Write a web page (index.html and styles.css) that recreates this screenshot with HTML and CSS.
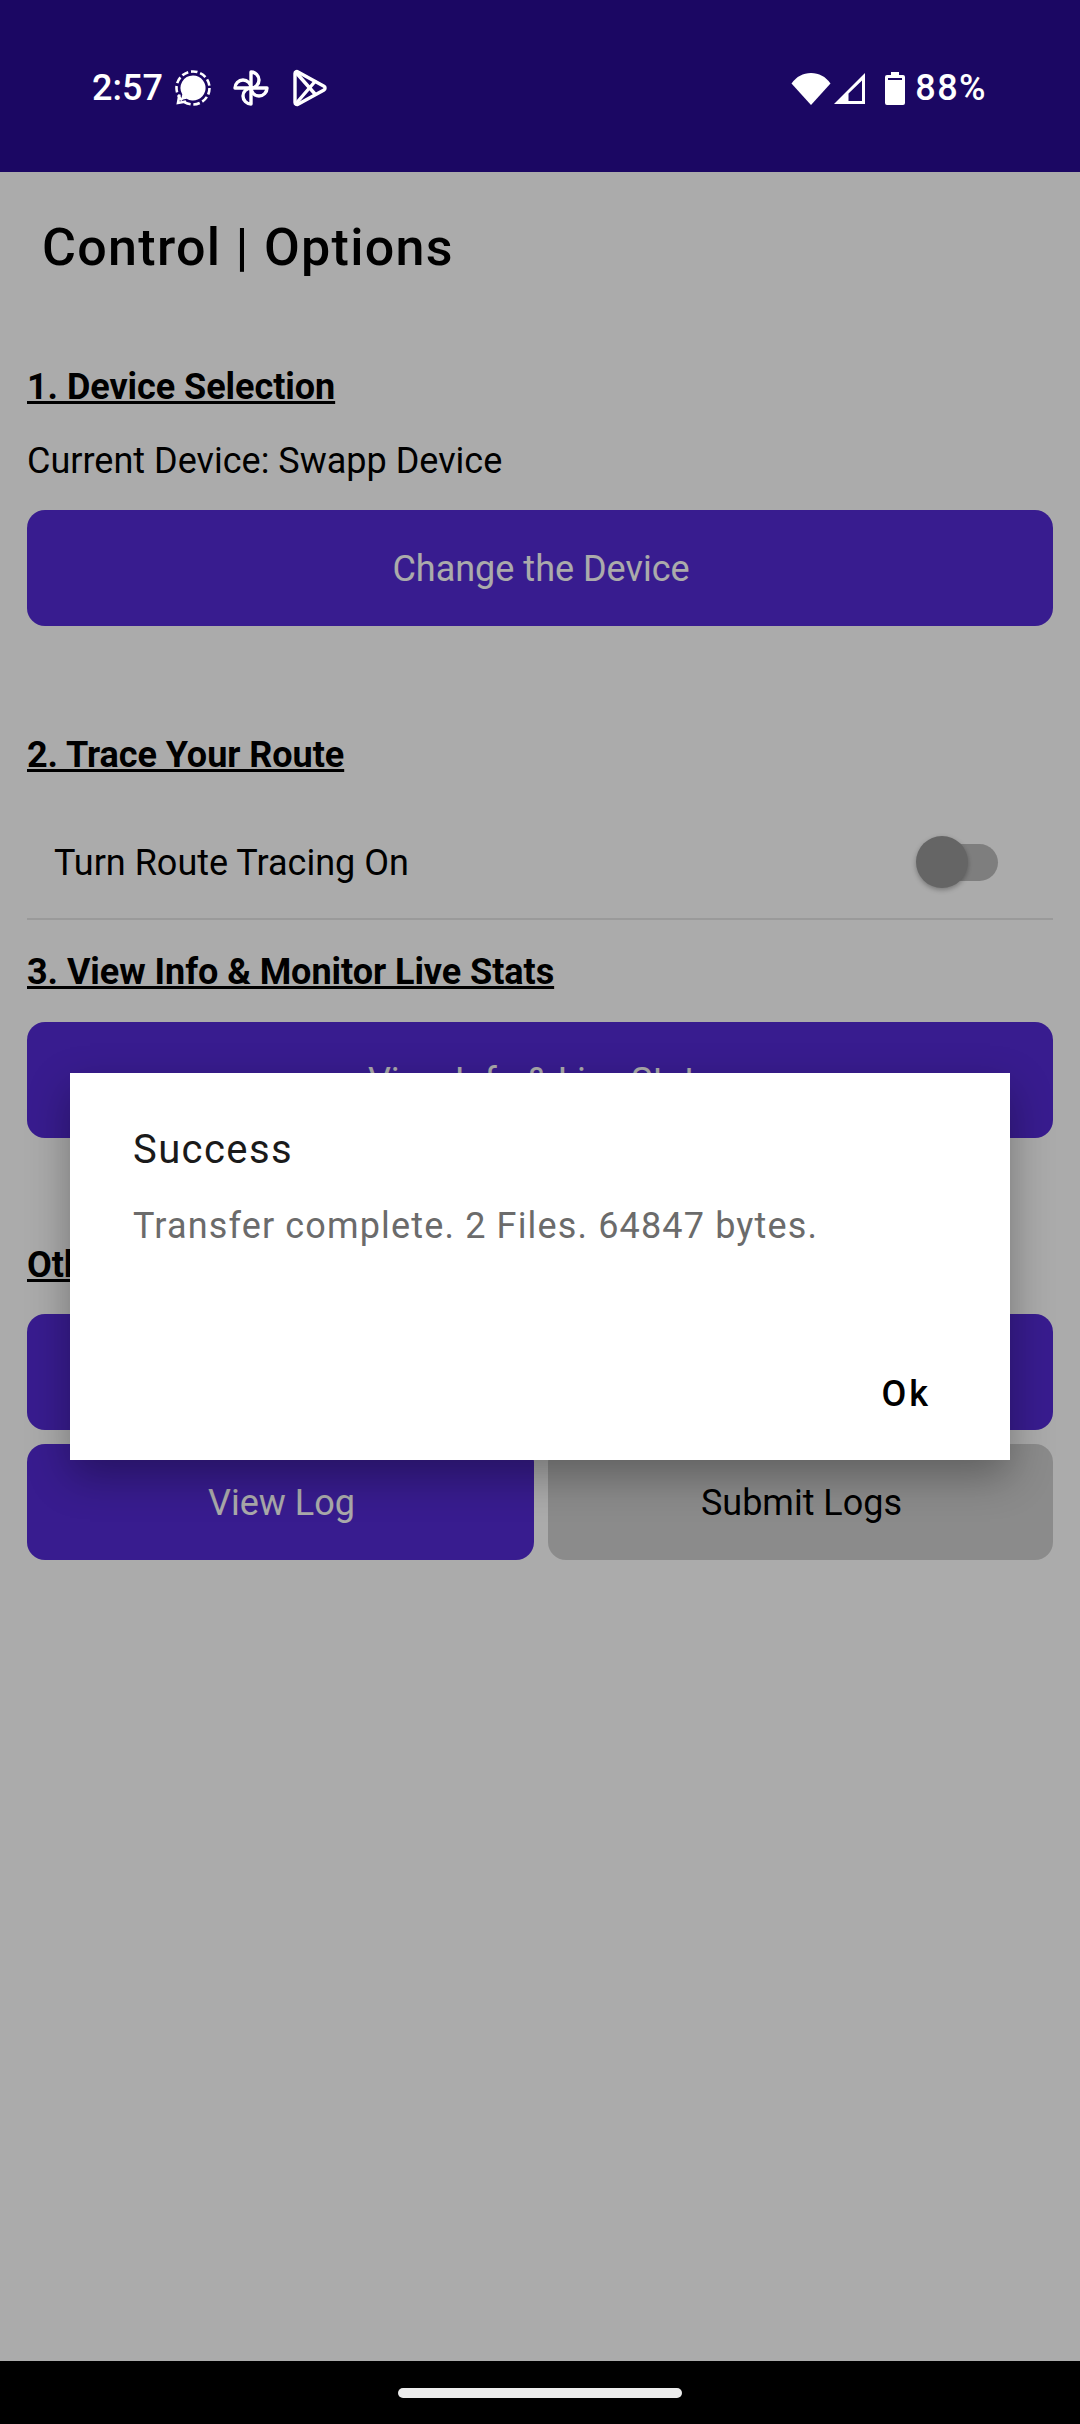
FILE: index.html
```html
<!DOCTYPE html>
<html lang="en">
<head>
    <meta charset="UTF-8">
    <title>Control | Options</title>
    <link rel="stylesheet" href="styles.css">
</head>
<body>
    <div class="status-bar">
        <div class="status-left">
            <span class="status-time">2:57</span>
            <svg class="icon-signal" width="38" height="38" viewBox="0 0 38 38">
                <circle cx="19" cy="19" r="16.5" fill="none" stroke="#fff" stroke-width="2.6" stroke-dasharray="6.6 2.8"/>
                <path d="M5.500 25.500 4 34l8-1.500" fill="none" stroke="#fff" stroke-width="2.6"/>
                <path d="M19 6.500a12.500 12.500 0 1 1-6.400 23.200L7 31l1.300-5.600A12.500 12.500 0 0 1 19 6.500z" fill="#fff"/>
            </svg>
            <svg class="icon-pinwheel" width="38" height="38" viewBox="0 0 38 38" fill="none" stroke="#fff" stroke-width="3.4" stroke-linejoin="round">
                <path d="M19 19V3a8 8 0 0 1 0 16z"/>
                <path d="M19 19h16a8 8 0 0 1-16 0z"/>
                <path d="M19 19v16a8 8 0 0 1 0-16z"/>
                <path d="M19 19H3a8 8 0 0 1 16 0z"/>
            </svg>
            <svg class="icon-play" width="36" height="38" viewBox="0 0 36 38" fill="none" stroke="#fff" stroke-width="3.4" stroke-linejoin="round" stroke-linecap="round">
                <path d="M3 4.500c0-1.600 1.600-2.400 3-1.600l26 14.400c1.400.8 1.400 2.800 0 3.600L6 35.200c-1.400.8-3 0-3-1.600z"/>
                <path d="M4 3.500 23 25"/>
                <path d="M4 34.500 23 12.500"/>
            </svg>
        </div>
        <div class="status-right">
            <svg width="40" height="33" viewBox="0 0 40 33"><path d="M.5 11.500C5.500 4.500 12 1 20 1s14.500 3.500 19.500 10.500L20 33z" fill="#fff"/></svg>
            <svg class="icon-cell" width="33" height="33" viewBox="0 0 33 33"><path d="M32 1v31H1zM29 8.500 15.500 21.500V29H29z" fill="#fff" fill-rule="evenodd"/></svg>
            <svg class="icon-battery" width="20" height="33" viewBox="0 0 20 33"><path d="M6 0h8v3h4a2 2 0 0 1 2 2v26a2 2 0 0 1-2 2H2a2 2 0 0 1-2-2V5a2 2 0 0 1 2-2h4z" fill="#fff"/><rect x="3" y="6" width="14" height="2" fill="#1b0763"/></svg>
            <span class="status-level">88%</span>
        </div>
    </div>

    <div class="main">
        <div class="content">
            <h1 class="page-title">Control | Options</h1>

            <h2 class="section-heading first">1. Device Selection</h2>
            <p class="current-device">Current Device: Swapp Device</p>
            <div class="btn">Change the Device</div>

            <h2 class="section-heading trace">2. Trace Your Route</h2>
            <div class="switch-row">
                <span class="switch-label">Turn Route Tracing On</span>
                <div class="switch">
                    <div class="switch-track"></div>
                    <div class="switch-thumb"></div>
                </div>
            </div>

            <h2 class="section-heading stats">3. View Info &amp; Monitor Live Stats</h2>
            <div class="btn">View Info &amp; Live Stats</div>

            <h2 class="section-heading other">Other</h2>
            <div class="btn-grid">
                <div class="btn"></div>
                <div class="btn"></div>
                <div class="btn">View Log</div>
                <div class="btn btn-disabled">Submit Logs</div>
            </div>
        </div>

        <div class="scrim">
            <div class="dialog">
                <div class="dialog-title">Success</div>
                <div class="dialog-message">Transfer complete. 2 Files. 64847 bytes.</div>
                <div class="dialog-actions">
                    <span class="dialog-ok">Ok</span>
                </div>
            </div>
        </div>
    </div>

    <div class="nav-bar">
        <div class="nav-pill"></div>
    </div>
</body>
</html>
```

FILE: styles.css
```css
* {
    margin: 0;
    padding: 0;
    box-sizing: border-box;
}

body {
    width: 1080px;
    height: 2424px;
    display: flex;
    flex-direction: column;
    overflow: hidden;
    font-family: Roboto, Arial, sans-serif;
    color: #000;
    background: #fff;
}

/* status bar */
.status-bar {
    height: 172px;
    flex: none;
    display: flex;
    justify-content: space-between;
    align-items: center;
    padding: 4px 93px 0 92px;
    background: #1b0763;
    color: #fff;
    font-size: 36px;
    font-weight: 500;
}

.status-left,
.status-right {
    display: flex;
    align-items: center;
}

.status-left svg {
    margin-left: 11px;
}

.status-left .icon-pinwheel {
    margin-left: 20px;
}

.status-left .icon-play {
    margin-left: 22px;
}

.icon-cell {
    margin-left: 2px;
}

.icon-battery {
    margin-left: 19px;
}

.status-level {
    margin-left: 10px;
    letter-spacing: 1.4px;
}

/* page */
.main {
    position: relative;
    flex: 1;
}

.content {
    padding: 0 27px;
}

.page-title {
    margin: 46px 0 0 15px;
    font-size: 52px;
    line-height: 60px;
    font-weight: 500;
    letter-spacing: 1.3px;
}

.section-heading {
    font-size: 36px;
    line-height: 42px;
    font-weight: 700;
    letter-spacing: -0.05px;
    text-decoration: underline;
}

.section-heading.first {
    margin-top: 88px;
}

.section-heading.trace {
    margin-top: 108px;
}

.section-heading.stats {
    margin-top: 31px;
}

.section-heading.other {
    margin-top: 106px;
}

.current-device {
    margin: 32px 0 28px;
    font-size: 36px;
    line-height: 42px;
}

.btn {
    height: 116px;
    display: flex;
    align-items: center;
    justify-content: center;
    padding: 2px 0 0 2px;
    border-radius: 18px;
    background: #542bd5;
    color: #fff;
    font-size: 36px;
}

.section-heading.stats + .btn {
    margin-top: 29px;
}

.btn-disabled {
    background: #d0d0d0;
    color: #000;
}

.btn-grid {
    margin-top: 28px;
    display: grid;
    grid-template-columns: 507px 505px;
    gap: 14px;
}

.switch-row {
    height: 115px;
    margin-top: 29px;
    display: flex;
    justify-content: space-between;
    align-items: center;
    padding: 0 55px 0 27px;
    border-bottom: 2px solid #e6e6e6;
    font-size: 36px;
}

.switch-label {
    padding-top: 3px;
}

.switch {
    position: relative;
    width: 82px;
    height: 52px;
}

.switch-track {
    position: absolute;
    top: 8px;
    right: 0;
    width: 60px;
    height: 37px;
    border-radius: 19px;
    background: #bdbdbd;
}

.switch-thumb {
    position: absolute;
    top: 0;
    left: 0;
    width: 52px;
    height: 52px;
    border-radius: 50%;
    background: #979797;
    box-shadow: 0 2px 5px rgba(0, 0, 0, 0.3);
}

/* dialog */
.scrim {
    position: absolute;
    top: 0;
    left: 0;
    width: 100%;
    height: 100%;
    display: flex;
    align-items: center;
    justify-content: center;
    background: rgba(0, 0, 0, 0.33);
}

.dialog {
    width: 940px;
    height: 387px;
    display: flex;
    flex-direction: column;
    padding: 0 36px 0 63px;
    background: #fff;
    box-shadow: 0 16px 40px rgba(0, 0, 0, 0.32);
}

.dialog-title {
    margin-top: 53px;
    font-size: 40px;
    line-height: 48px;
    letter-spacing: 1.4px;
    color: #1a1a1a;
}

.dialog-message {
    margin-top: 31px;
    font-size: 36px;
    line-height: 42px;
    letter-spacing: 1.15px;
    color: #6b6b6b;
}

.dialog-actions {
    margin-top: auto;
    margin-bottom: 45px;
    padding-right: 43px;
    display: flex;
    justify-content: flex-end;
}

.dialog-ok {
    font-size: 36px;
    line-height: 42px;
    font-weight: 500;
    letter-spacing: 3px;
}

.nav-bar {
    height: 63px;
    flex: none;
    display: flex;
    justify-content: center;
    padding-top: 27px;
    background: #000;
}

.nav-pill {
    width: 284px;
    height: 10px;
    border-radius: 5px;
    background: #ececec;
}
```
